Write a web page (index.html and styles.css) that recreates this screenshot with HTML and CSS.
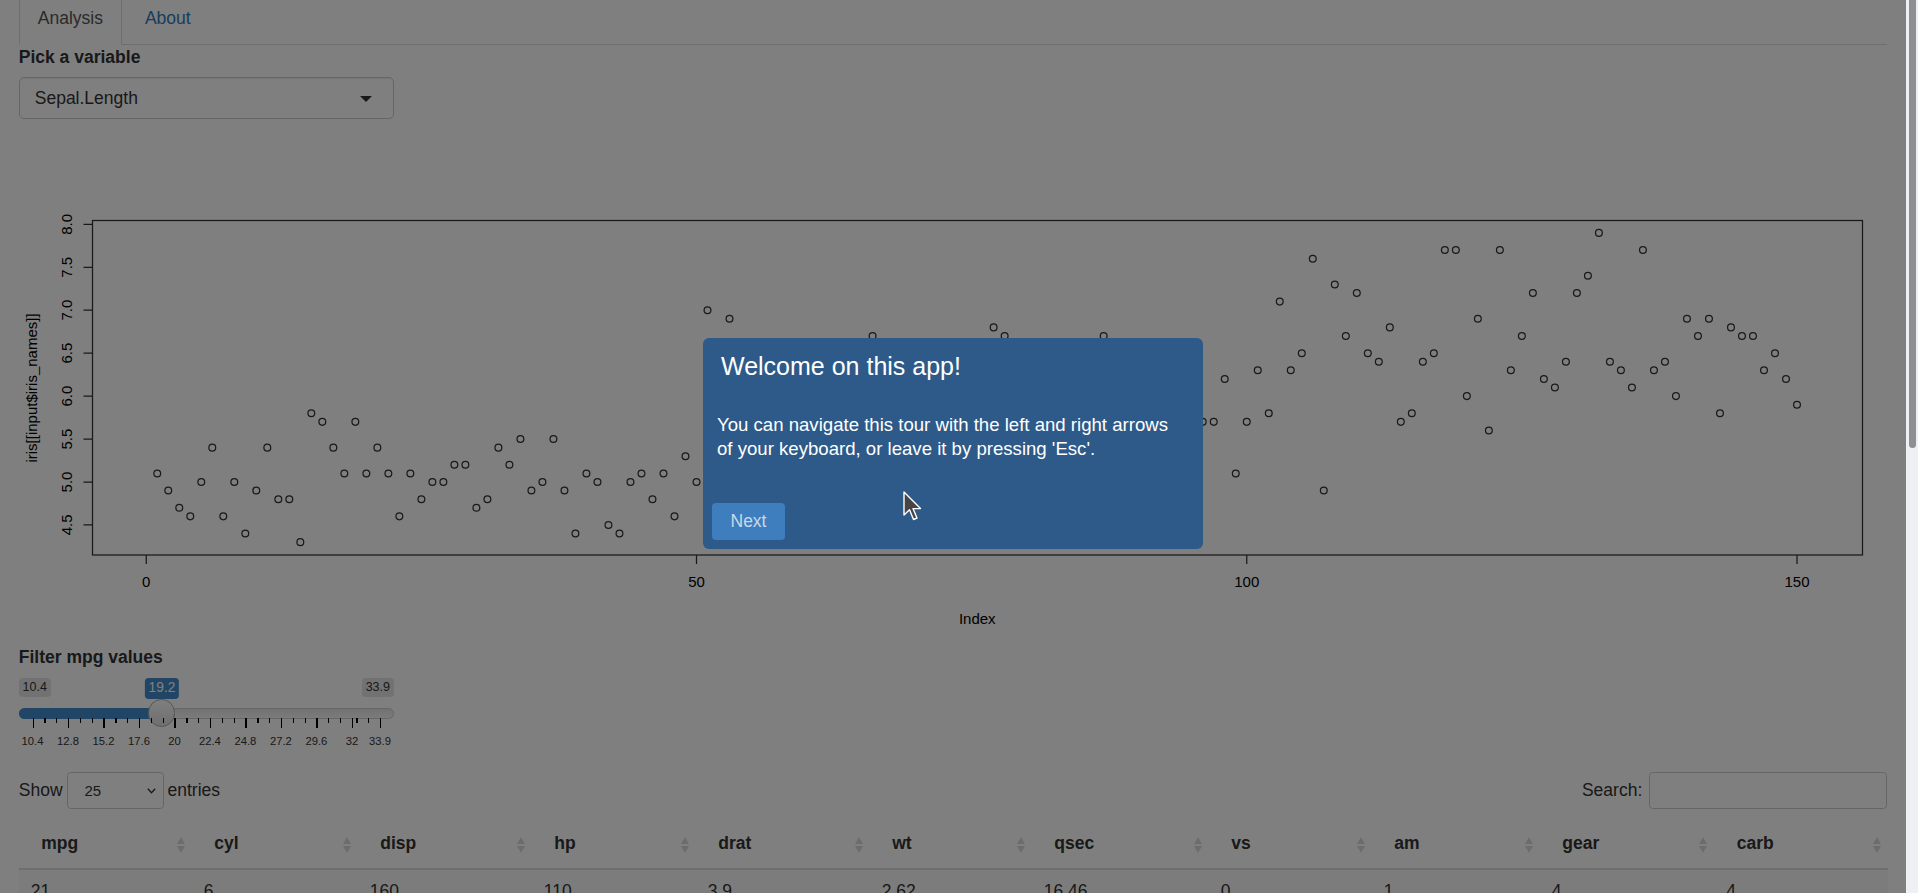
FILE: index.html
```html
<!DOCTYPE html>
<html lang="en">
<head>
<meta charset="utf-8">
<title>Iris tour app</title>
<link rel="stylesheet" href="styles.css">
</head>
<body>
<div class="app">
<div class="page">
  <ul class="nav-tabs">
    <li class="active"><a href="#">Analysis</a></li>
    <li><a href="#">About</a></li>
  </ul>

  <div class="tab-pane">
    <div class="form-group select-group">
      <label class="control-label">Pick a variable</label>
      <div class="selectize"><span>Sepal.Length</span><span class="caret"></span></div>
    </div>

    <div class="plot">
      <svg class="plot-svg" width="100%" height="500">
        <rect x="73.5" y="82.5" width="1770" height="334.5" fill="none" stroke="#333" stroke-width="1.25"/>
        <path d="M64.5 86.3H73.5M64.5 129.25H73.5M64.5 172.2H73.5M64.5 215.15H73.5M64.5 258.1H73.5M64.5 301.05H73.5M64.5 344H73.5M64.5 386.95H73.5" stroke="#333" stroke-width="1.25"/>
        <path d="M127.25 417V426M677.5 417V426M1227.75 417V426M1778 417V426" stroke="#333" stroke-width="1.25"/>
        <g class="axis-text" text-anchor="middle" dominant-baseline="central">
          <text transform="translate(47.5 86.3) rotate(-90)">8.0</text>
          <text transform="translate(47.5 129.25) rotate(-90)">7.5</text>
          <text transform="translate(47.5 172.2) rotate(-90)">7.0</text>
          <text transform="translate(47.5 215.15) rotate(-90)">6.5</text>
          <text transform="translate(47.5 258.1) rotate(-90)">6.0</text>
          <text transform="translate(47.5 301.05) rotate(-90)">5.5</text>
          <text transform="translate(47.5 344) rotate(-90)">5.0</text>
          <text transform="translate(47.5 386.95) rotate(-90)">4.5</text>
          <text x="127.25" y="443.7">0</text>
          <text x="677.5" y="443.7">50</text>
          <text x="1227.75" y="443.7">100</text>
          <text x="1778" y="443.7">150</text>
          <text x="958.25" y="480">Index</text>
          <text transform="translate(12 250) rotate(-90)">iris[[input$iris_names]]</text>
        </g>
        <g id="pts" fill="none" stroke="#333" stroke-width="1.25"></g>
      </svg>
    </div>

    <div class="form-group slider-group">
      <label class="control-label">Filter mpg values</label>
      <div class="irs">
        <span class="irs-min">10.4</span>
        <span class="irs-max">33.9</span>
        <span class="irs-line"></span>
        <span class="irs-bar" style="width:142.75px"></span>
        <span class="irs-handle" style="left:129px"></span>
        <span class="irs-single" style="left:143.25px">19.2</span>
        <div class="irs-grid">
          <span class="pol" style="left:0%"></span>
          <span class="pol small" style="left:3.404%"></span>
          <span class="pol small" style="left:6.809%"></span>
          <span class="pol" style="left:10.213%"></span>
          <span class="pol small" style="left:13.617%"></span>
          <span class="pol small" style="left:17.021%"></span>
          <span class="pol" style="left:20.426%"></span>
          <span class="pol small" style="left:23.830%"></span>
          <span class="pol small" style="left:27.234%"></span>
          <span class="pol" style="left:30.638%"></span>
          <span class="pol small" style="left:34.043%"></span>
          <span class="pol small" style="left:37.447%"></span>
          <span class="pol" style="left:40.851%"></span>
          <span class="pol small" style="left:44.255%"></span>
          <span class="pol small" style="left:47.660%"></span>
          <span class="pol" style="left:51.064%"></span>
          <span class="pol small" style="left:54.468%"></span>
          <span class="pol small" style="left:57.872%"></span>
          <span class="pol" style="left:61.277%"></span>
          <span class="pol small" style="left:64.681%"></span>
          <span class="pol small" style="left:68.085%"></span>
          <span class="pol" style="left:71.489%"></span>
          <span class="pol small" style="left:74.894%"></span>
          <span class="pol small" style="left:78.298%"></span>
          <span class="pol" style="left:81.702%"></span>
          <span class="pol small" style="left:85.106%"></span>
          <span class="pol small" style="left:88.511%"></span>
          <span class="pol" style="left:91.915%"></span>
          <span class="pol small" style="left:93.19%"></span>
          <span class="pol small" style="left:96.6%"></span>
          <span class="pol" style="left:100%"></span>
          <span class="gtext" style="left:0%">10.4</span>
          <span class="gtext" style="left:10.213%">12.8</span>
          <span class="gtext" style="left:20.426%">15.2</span>
          <span class="gtext" style="left:30.638%">17.6</span>
          <span class="gtext" style="left:40.851%">20</span>
          <span class="gtext" style="left:51.064%">22.4</span>
          <span class="gtext" style="left:61.277%">24.8</span>
          <span class="gtext" style="left:71.489%">27.2</span>
          <span class="gtext" style="left:81.702%">29.6</span>
          <span class="gtext" style="left:91.915%">32</span>
          <span class="gtext" style="left:100%">33.9</span>
        </div>
      </div>
    </div>

    <div class="dt-wrapper">
      <div class="dt-top">
        <div class="dt-length">
          <span>Show</span>
          <span class="dt-select"><span>25</span>
            <svg width="9" height="6" viewBox="0 0 9 6"><path d="M0.8 0.8L4.5 4.8L8.2 0.8" fill="none" stroke="#333" stroke-width="1.3"/></svg>
          </span>
          <span>entries</span>
        </div>
        <div class="dt-search">
          <span>Search:</span>
          <span class="dt-input"></span>
        </div>
      </div>
      <table class="dt">
        <thead>
          <tr><th>mpg</th><th>cyl</th><th>disp</th><th>hp</th><th>drat</th><th>wt</th><th>qsec</th><th>vs</th><th>am</th><th>gear</th><th>carb</th></tr>
        </thead>
        <tbody>
          <tr><td>21</td><td>6</td><td>160</td><td>110</td><td>3.9</td><td>2.62</td><td>16.46</td><td>0</td><td>1</td><td>4</td><td>4</td></tr>
          <tr><td>21</td><td>6</td><td>160</td><td>110</td><td>3.9</td><td>2.875</td><td>17.02</td><td>0</td><td>1</td><td>4</td><td>4</td></tr>
          <tr><td>22.8</td><td>4</td><td>108</td><td>93</td><td>3.85</td><td>2.32</td><td>18.61</td><td>1</td><td>1</td><td>4</td><td>1</td></tr>
          <tr><td>21.4</td><td>6</td><td>258</td><td>110</td><td>3.08</td><td>3.215</td><td>19.44</td><td>1</td><td>0</td><td>3</td><td>1</td></tr>
          <tr><td>24.4</td><td>4</td><td>146.7</td><td>62</td><td>3.69</td><td>3.19</td><td>20</td><td>1</td><td>0</td><td>4</td><td>2</td></tr>
          <tr><td>22.8</td><td>4</td><td>140.8</td><td>95</td><td>3.92</td><td>3.15</td><td>22.9</td><td>1</td><td>0</td><td>4</td><td>2</td></tr>
          <tr><td>32.4</td><td>4</td><td>78.7</td><td>66</td><td>4.08</td><td>2.2</td><td>19.47</td><td>1</td><td>1</td><td>4</td><td>1</td></tr>
          <tr><td>30.4</td><td>4</td><td>75.7</td><td>52</td><td>4.93</td><td>1.615</td><td>18.52</td><td>1</td><td>1</td><td>4</td><td>2</td></tr>
          <tr><td>33.9</td><td>4</td><td>71.1</td><td>65</td><td>4.22</td><td>1.835</td><td>19.9</td><td>1</td><td>1</td><td>4</td><td>1</td></tr>
          <tr><td>21.5</td><td>4</td><td>120.1</td><td>97</td><td>3.7</td><td>2.465</td><td>20.01</td><td>1</td><td>0</td><td>3</td><td>1</td></tr>
          <tr><td>27.3</td><td>4</td><td>79</td><td>66</td><td>4.08</td><td>1.935</td><td>18.9</td><td>1</td><td>1</td><td>4</td><td>1</td></tr>
          <tr><td>26</td><td>4</td><td>120.3</td><td>91</td><td>4.43</td><td>2.14</td><td>16.7</td><td>0</td><td>1</td><td>5</td><td>2</td></tr>
          <tr><td>30.4</td><td>4</td><td>95.1</td><td>113</td><td>3.77</td><td>1.513</td><td>16.9</td><td>1</td><td>1</td><td>5</td><td>2</td></tr>
          <tr><td>21.4</td><td>4</td><td>121</td><td>109</td><td>4.11</td><td>2.78</td><td>18.6</td><td>1</td><td>1</td><td>4</td><td>2</td></tr>
        </tbody>
      </table>
      <div class="dt-bottom">
        <div>Showing 1 to 14 of 14 entries</div>
        <ul class="pagination">
          <li class="disabled">Previous</li>
          <li class="current">1</li>
          <li class="disabled">Next</li>
        </ul>
      </div>
    </div>
  </div>
</div>
</div>

<div class="scrollbar"><div class="scrollbar-thumb"></div></div>

<div class="overlay"></div>

<div class="tour-popover">
  <div class="tour-title">Welcome on this app!</div>
  <div class="tour-desc">You can navigate this tour with the left and right arrows of your keyboard, or leave it by pressing 'Esc'.</div>
  <div class="tour-footer"><button class="tour-next" type="button">Next</button></div>
</div>

<svg class="cursor" width="20" height="31" viewBox="0 0 20 31">
  <path d="M1 1L1 24L6.5 18.8L10.5 28.5L14 27L10 17.6L17.5 17.6Z" fill="#454545" stroke="#fff" stroke-width="1.4" stroke-linejoin="round"/>
</svg>

<script src="script.js"></script>
</body>
</html>
```

FILE: styles.css
```css
html, body {
  height: 100%;
  overflow: hidden;
}

body {
  margin: 0;
  display: flex;
  background: #fff;
  font-family: "Liberation Sans", Arial, sans-serif;
  font-size: 17.5px;
  line-height: 25px;
  color: #333;
}

.app {
  flex: 1;
  min-width: 0;
  height: 100vh;
  overflow-y: auto;
  background: #fff;
}
.app::-webkit-scrollbar { display: none; }

/* scrollbar strip beside the page */
.scrollbar {
  flex: 0 0 12px;
  box-sizing: border-box;
  height: 100vh;
  padding: 0 2px 0 3px;
  background: #eef0f3;
}
.scrollbar-thumb {
  height: 448px;
  border-radius: 0 0 4px 4px;
  background: #8d8f91;
}

.page {
  padding: 0 18.75px 240px;
}

/* tabs */
.nav-tabs {
  display: flex;
  list-style: none;
  margin: -7px 0 0;
  padding: 0;
  border-bottom: 1px solid #ddd;
}
.nav-tabs li {
  margin: 0 4px -1px 0;
}
.nav-tabs a {
  display: block;
  padding: 12px 18px 13px;
  line-height: 25px;
  border: 1px solid transparent;
  border-radius: 5px 5px 0 0;
  color: #337ab7;
  text-decoration: none;
}
.nav-tabs li.active a {
  color: #555;
  background: #fff;
  border-color: #ddd #ddd transparent;
}

/* form controls */
.control-label {
  display: block;
  font-weight: bold;
  line-height: 25px;
  margin-bottom: 7px;
}
.select-group { margin-bottom: 19px; }

.selectize {
  box-sizing: border-box;
  width: 375px;
  height: 42px;
  display: flex;
  align-items: center;
  justify-content: space-between;
  padding: 0 21px 0 15px;
  border: 1px solid #ccc;
  border-radius: 5px;
  background: #fff;
  box-shadow: inset 0 1px 1px rgba(0,0,0,.075);
}
.caret {
  width: 0;
  height: 0;
  border-left: 6.25px solid transparent;
  border-right: 6.25px solid transparent;
  border-top: 6.25px solid #333;
  margin-top: 2px;
}

/* plot */
.plot { height: 500px; }
.plot-svg { display: block; }
.axis-text {
  font-family: "Liberation Sans", Arial, sans-serif;
  font-size: 15px;
  fill: #000;
}

/* slider */
.slider-group {
  margin-top: 6.5px;
  margin-bottom: 22px;
}
.slider-group .control-label { margin-bottom: 6.25px; }
.irs {
  position: relative;
  width: 375px;
  height: 74px;
}
.irs-min, .irs-max, .irs-single {
  position: absolute;
  top: 2.25px;
  padding: 1.25px 3.75px;
  border-radius: 3.75px;
  line-height: 16.7px;
  font-size: 12.5px;
  color: #333;
  background: rgba(0,0,0,.1);
}
.irs-min { left: 0; }
.irs-max { right: 0; }
.irs-single {
  font-size: 13.75px;
  line-height: 18.3px;
  color: #fff;
  background: #428bca;
  transform: translateX(-50%);
}
.irs-line {
  position: absolute;
  left: 0;
  right: 0;
  top: 32.25px;
  height: 11px;
  box-sizing: border-box;
  border: 1px solid #ccc;
  border-radius: 10px;
  background: linear-gradient(to bottom, #ddd -50%, #fff 150%);
}
.irs-bar {
  position: absolute;
  left: 0;
  top: 32.25px;
  height: 11px;
  border-radius: 10px 0 0 10px;
  background: #428bca;
}
.irs-handle {
  position: absolute;
  top: 23.25px;
  width: 27.5px;
  height: 27.5px;
  box-sizing: border-box;
  border: 1px solid #ababab;
  border-radius: 50%;
  background: linear-gradient(to bottom, #fff 0%, #dedede 100%);
  box-shadow: 1px 1px 3px rgba(255,255,255,.3);
}
.irs-grid {
  position: absolute;
  left: 13.75px;
  right: 13.75px;
  top: 42.5px;
  height: 30px;
}
.pol {
  position: absolute;
  top: 0;
  width: 1.25px;
  height: 10px;
  background: #000;
}
.pol.small { height: 5px; }
.gtext {
  position: absolute;
  top: 17px;
  font-size: 11.25px;
  line-height: 13px;
  color: #333;
  transform: translateX(-50%);
  white-space: nowrap;
}

/* datatable */
.dt-top {
  display: flex;
  justify-content: space-between;
  align-items: center;
  height: 37.5px;
}
.dt-length, .dt-search {
  display: flex;
  align-items: center;
  gap: 4px;
}
.dt-search { gap: 7px; }
.dt-select {
  box-sizing: border-box;
  width: 97px;
  height: 37.5px;
  display: flex;
  align-items: center;
  justify-content: space-between;
  padding: 0 7px 0 17px;
  border: 1px solid #ccc;
  border-radius: 3.75px;
  font-size: 15px;
  background: #fff;
}
.dt-input {
  box-sizing: border-box;
  width: 238px;
  height: 37.5px;
  border: 1px solid #ccc;
  border-radius: 3.75px;
  background: #fff;
}

table.dt {
  width: 100%;
  margin-top: 9px;
  border-collapse: collapse;
  table-layout: fixed;
}
table.dt th {
  position: relative;
  text-align: left;
  font-weight: bold;
  padding: 12.5px 30px 12.5px 22.5px;
  border-bottom: 2px solid #ddd;
}
table.dt th::before,
table.dt th::after {
  content: "";
  position: absolute;
  right: 7px;
  width: 0;
  height: 0;
  border-left: 4.5px solid transparent;
  border-right: 4.5px solid transparent;
}
table.dt th::before {
  top: 18.5px;
  border-bottom: 7px solid #d9d9d9;
}
table.dt th::after {
  top: 27.5px;
  border-top: 7px solid #d9d9d9;
}
table.dt th:nth-child(1) { width: 173px; }
table.dt th:nth-child(2) { width: 166px; }
table.dt th:nth-child(3) { width: 174px; }
table.dt th:nth-child(4) { width: 164px; }
table.dt th:nth-child(5) { width: 174px; }
table.dt th:nth-child(6) { width: 162px; }
table.dt th:nth-child(7) { width: 177px; }
table.dt th:nth-child(8) { width: 163px; }
table.dt th:nth-child(9) { width: 168px; }
table.dt th:nth-child(10) { width: 174.5px; }
table.dt th:nth-child(11) { width: 173.5px; }
table.dt th, table.dt td { box-sizing: border-box; }
table.dt td {
  padding: 9px 12px;
  border-top: 1px solid #ddd;
}
table.dt tbody tr:first-child td { border-top: 0; }
table.dt tbody tr:nth-child(odd) { background: #f9f9f9; }

.dt-bottom {
  display: flex;
  justify-content: space-between;
  align-items: center;
  margin-top: 10px;
  height: 45px;
}
.pagination {
  display: flex;
  list-style: none;
  margin: 0;
  padding: 0;
}
.pagination li {
  padding: 7.5px 15px;
  border: 1px solid #ddd;
  margin-left: -1px;
  color: #777;
}
.pagination li.current {
  color: #fff;
  background: #337ab7;
  border-color: #337ab7;
}

/* tour overlay */
.overlay {
  position: fixed;
  top: 0;
  bottom: 0;
  left: 0;
  right: 12px;
  background: rgba(0,0,0,.5);
}
.tour-popover {
  position: fixed;
  left: 703px;
  top: 338px;
  width: 500px;
  height: 211px;
  box-sizing: border-box;
  display: flex;
  flex-direction: column;
  padding: 13px 0 9px;
  border-radius: 6px;
  background: #2d5a88;
  color: #fff;
}
.tour-title {
  padding: 0 18px;
  font-size: 25px;
  line-height: 30px;
}
.tour-desc {
  margin-top: 32.4px;
  padding: 0 20px 0 14px;
  font-size: 18.6px;
  line-height: 23.3px;
}
.tour-footer {
  margin-top: auto;
  padding: 0 9px;
}
.tour-next {
  width: 73px;
  height: 37px;
  border: 0;
  border-radius: 4px;
  background: #3e7ebe;
  color: #c9d8e8;
  font-family: "Liberation Sans", Arial, sans-serif;
  font-size: 17.5px;
  padding: 0;
}
.cursor {
  position: fixed;
  left: 902.5px;
  top: 491px;
}
```

FILE: script.js
```js
var sepal = [
  5.1,4.9,4.7,4.6,5.0,5.4,4.6,5.0,4.4,4.9,
  5.4,4.8,4.8,4.3,5.8,5.7,5.4,5.1,5.7,5.1,
  5.4,5.1,4.6,5.1,4.8,5.0,5.0,5.2,5.2,4.7,
  4.8,5.4,5.2,5.5,4.9,5.0,5.5,4.9,4.4,5.1,
  5.0,4.5,4.4,5.0,5.1,4.8,5.1,4.6,5.3,5.0,
  7.0,6.4,6.9,5.5,6.5,5.7,6.3,4.9,6.6,5.2,
  5.0,5.9,6.0,6.1,5.6,6.7,5.6,5.8,6.2,5.6,
  5.9,6.1,6.3,6.1,6.4,6.6,6.8,6.7,6.0,5.7,
  5.5,5.5,5.8,6.0,5.4,6.0,6.7,6.3,5.6,5.5,
  5.5,6.1,5.8,5.0,5.6,5.7,5.7,6.2,5.1,5.7,
  6.3,5.8,7.1,6.3,6.5,7.6,4.9,7.3,6.7,7.2,
  6.5,6.4,6.8,5.7,5.8,6.4,6.5,7.7,7.7,6.0,
  6.9,5.6,7.7,6.3,6.7,7.2,6.2,6.1,6.4,7.2,
  7.4,7.9,6.4,6.3,6.1,7.7,6.3,6.4,6.0,6.9,
  6.7,6.9,5.8,6.8,6.7,6.7,6.3,6.5,6.2,5.9
];
var g = document.getElementById('pts');
var ns = 'http://www.w3.org/2000/svg';
sepal.forEach(function (v, i) {
  var c = document.createElementNS(ns, 'circle');
  c.setAttribute('cx', (127.25 + 11.005 * (i + 1)).toFixed(2));
  c.setAttribute('cy', (86.3 + (8 - v) * 85.9).toFixed(2));
  c.setAttribute('r', '3.4');
  g.appendChild(c);
});
```
